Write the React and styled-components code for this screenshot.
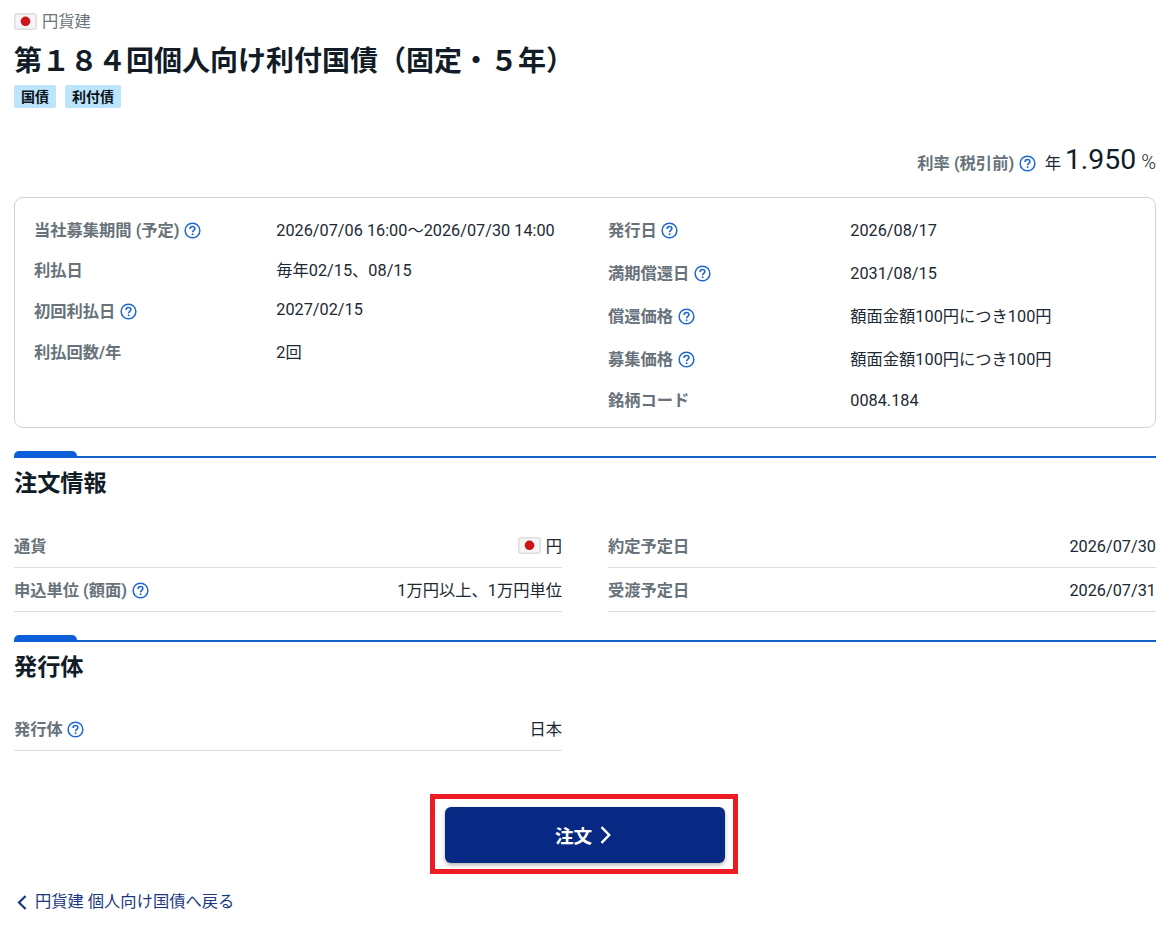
import styled, { createGlobalStyle } from 'styled-components';

const GlobalStyle = createGlobalStyle`
  * {
    box-sizing: border-box;
  }
  body {
    margin: 0;
    background-color: white;
    font-family: Roboto, 'Noto Sans CJK JP', sans-serif;
    font-size: 16.28px;
    line-height: 24px;
    color: #1c2833;
  }
`;

const Container = styled.main`
  width: 1170px;
  height: 928px;
  padding: 10px 14px 0;
  overflow: hidden;
`;

const Currency = styled.div`
  display: flex;
  align-items: center;
  gap: 5px;
  height: 24px;
  color: #6b747b;
`;

const FlagSvg = styled.svg`
  display: block;
  flex: none;
  margin-top: -2px;
`;

const HelpSvg = styled.svg`
  flex: none;
  margin-top: -1px;
`;

const Title = styled.h1`
  height: 42px;
  margin: 7px 0 0;
  font-size: 28px;
  font-weight: 700;
  line-height: 42px;
  color: #111c27;
  white-space: nowrap;
`;

const Tags = styled.div`
  display: flex;
  gap: 9px;
  margin-top: 2px;
`;

const Tag = styled.span`
  height: 23px;
  padding: 1px 7px 0;
  border-radius: 2px;
  background-color: #bce4fa;
  color: #0a1118;
  font-size: 14px;
  font-weight: 700;
  line-height: 23px;
`;

const Rate = styled.div`
  display: flex;
  align-items: baseline;
  justify-content: flex-end;
  height: 42px;
  margin-top: 31px;
  line-height: 42px;
`;

const RateValue = styled.span`
  margin: 0 5px 0 4px;
  font-size: 28.4px;
  color: #111c27;
`;

const Percent = styled.span`
  font-size: 20px;
  font-weight: 300;
`;

const Year = styled.span`
  margin-left: 9px;
`;

const Label = styled.span`
  display: flex;
  align-items: center;
  gap: 4.5px;
  font-weight: 700;
  color: #68727a;
  white-space: nowrap;
`;

const Card = styled.section`
  display: grid;
  grid-template-columns: 574px 1fr;
  height: 231px;
  margin-top: 16px;
  padding: 21px 19px 0;
  border: 1px solid #ccd3dc;
  border-radius: 9px;
`;

const SummaryRow = styled.div`
  display: grid;
  grid-template-columns: 242.3px 1fr;
  height: ${(props) => props.$height}px;
`;

const Value = styled.span`
  display: flex;
  align-items: center;
  gap: 5px;
  white-space: nowrap;
`;

const SummaryLabel = styled(Label)`
  height: 24px;
`;

const SummaryValue = styled(Value)`
  height: 24px;
  margin-top: ${(props) => props.$shift || 0}px;
`;

const Section = styled.section`
  margin-top: ${(props) => props.$top}px;
`;

const SectionRule = styled.div`
  height: 7px;
  border-bottom: 2px solid #1860c8;
  &::before {
    content: '';
    display: block;
    width: 63px;
    height: 7px;
    border-radius: 5px 5px 0 0;
    background-color: #0c5fd6;
  }
`;

const Heading = styled.h2`
  height: 34px;
  margin: 8px 0 ${(props) => props.$bottom}px;
  font-size: 23.2px;
  font-weight: 700;
  line-height: 34px;
  color: #111c27;
`;

const Columns = styled.div`
  display: grid;
  grid-template-columns: 1fr 1fr;
  column-gap: 46px;
`;

const DetailRow = styled.div`
  display: flex;
  align-items: center;
  justify-content: space-between;
  height: 44px;
  padding-top: 2px;
  border-bottom: 1px solid #d7dee5;
`;

const Actions = styled.div`
  display: flex;
  margin: 43px 0 0 416px;
`;

const Highlight = styled.div`
  width: 308px;
  height: 80px;
  padding: 8px 8px 0 10px;
  border: 5px solid #ed1c24;
`;

const OrderButton = styled.button`
  display: flex;
  align-items: center;
  justify-content: center;
  gap: 8px;
  width: 280px;
  height: 56px;
  padding: 0 4px 1px 0;
  border: none;
  border-radius: 6px;
  background-color: #082983;
  box-shadow: 0 2px 4px rgba(0, 0, 0, 0.3);
  color: white;
  font-family: inherit;
  font-size: 18.6px;
  font-weight: 700;
  cursor: pointer;
`;

const BackLink = styled.a`
  display: flex;
  align-items: center;
  gap: 8px;
  width: max-content;
  height: 24px;
  margin: 16px 0 0 3px;
  color: #1b387f;
  cursor: pointer;
`;

const Flag = () => (
  <FlagSvg width="23" height="17" viewBox="0 0 23 17">
    <rect x="0.75" y="0.75" width="21.5" height="15.5" rx="2.5" fill="#f5f5f5" stroke="#dedede" strokeWidth="1.5" />
    <circle cx="11.5" cy="8.3" r="4.8" fill="#cd141b" />
  </FlagSvg>
);

const Help = () => (
  <HelpSvg width="17" height="17" viewBox="0 0 17 17" fill="none" stroke="#1f66d0" strokeWidth="1.5">
    <circle cx="8.5" cy="8.5" r="7.35" />
    <path d="M6.1 6.9C6.1 5.4 7.1 4.5 8.5 4.5s2.4.9 2.4 2.1c0 1.7-2.3 1.9-2.3 3.7" strokeWidth="1.6" />
    <circle cx="8.6" cy="12.2" r="0.95" fill="#1f66d0" stroke="none" />
  </HelpSvg>
);

const leftSummary = [
  { label: '当社募集期間 (予定)', help: true, value: '2026/07/06 16:00〜2026/07/30 14:00', height: 40 },
  { label: '利払日', value: '毎年02/15、08/15', height: 41 },
  { label: '初回利払日', help: true, value: '2027/02/15', height: 41, shift: -2 },
  { label: '利払回数/年', value: '2回', height: 41 },
];

const rightSummary = [
  { label: '発行日', help: true, value: '2026/08/17', height: 43 },
  { label: '満期償還日', help: true, value: '2031/08/15', height: 43 },
  { label: '償還価格', help: true, value: '額面金額100円につき100円', height: 43 },
  { label: '募集価格', help: true, value: '額面金額100円につき100円', height: 41 },
  { label: '銘柄コード', value: '0084.184', height: 40 },
];

function SummaryList({ items }) {
  return (
    <div>
      {items.map((item) => (
        <SummaryRow key={item.label} $height={item.height}>
          <SummaryLabel>
            {item.label}
            {item.help && <Help />}
          </SummaryLabel>
          <SummaryValue $shift={item.shift}>{item.value}</SummaryValue>
        </SummaryRow>
      ))}
    </div>
  );
}

function Detail({ label, help, children }) {
  return (
    <DetailRow>
      <Label>
        {label}
        {help && <Help />}
      </Label>
      <Value>{children}</Value>
    </DetailRow>
  );
}

function App() {
  return (
    <>
      <GlobalStyle />
      <Container>
        <Currency>
          <Flag />
          円貨建
        </Currency>
        <Title>第１８４回個人向け利付国債（固定・５年）</Title>
        <Tags>
          <Tag>国債</Tag>
          <Tag>利付債</Tag>
        </Tags>
        <Rate>
          <Label>
            利率 (税引前)
            <Help />
          </Label>
          <Year>年</Year>
          <RateValue>1.950</RateValue>
          <Percent>%</Percent>
        </Rate>
        <Card>
          <SummaryList items={leftSummary} />
          <SummaryList items={rightSummary} />
        </Card>
        <Section $top={23}>
          <SectionRule />
          <Heading $bottom={24}>注文情報</Heading>
          <Columns>
            <Detail label="通貨">
              <Flag />円
            </Detail>
            <Detail label="約定予定日">2026/07/30</Detail>
            <Detail label="申込単位 (額面)" help>
              1万円以上、1万円単位
            </Detail>
            <Detail label="受渡予定日">2026/07/31</Detail>
          </Columns>
        </Section>
        <Section $top={23}>
          <SectionRule />
          <Heading $bottom={23}>発行体</Heading>
          <Columns>
            <Detail label="発行体" help>
              日本
            </Detail>
          </Columns>
        </Section>
        <Actions>
          <Highlight>
            <OrderButton>
              注文
              <svg width="11" height="18" viewBox="0 0 11 18" fill="none" stroke="currentColor" strokeWidth="2.4">
                <path d="M1.5 1.2 9.2 9 1.5 16.8" />
              </svg>
            </OrderButton>
          </Highlight>
        </Actions>
        <BackLink>
          <svg width="10" height="15" viewBox="0 0 10 15" fill="none" stroke="#173987" strokeWidth="2.2">
            <path d="M8.6 1 2 7.5 8.6 14" />
          </svg>
          円貨建 個人向け国債へ戻る
        </BackLink>
      </Container>
    </>
  );
}

export default App;
